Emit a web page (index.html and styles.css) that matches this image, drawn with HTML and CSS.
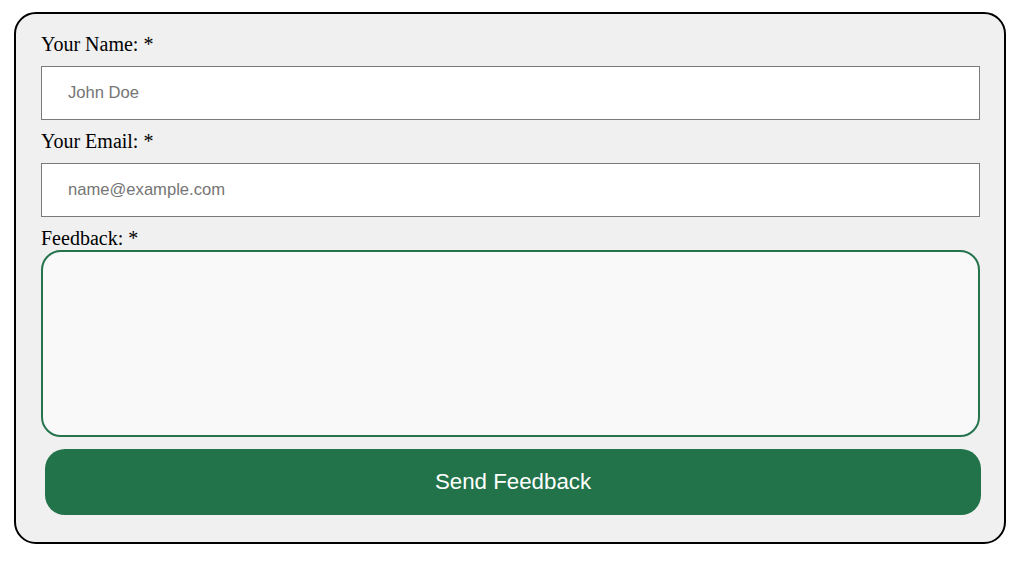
FILE: index.html
```html
<!DOCTYPE html>
<html>
<head>
<meta charset="utf-8">
<link rel="stylesheet" href="styles.css">
</head>
<body>
<form class="feedback-form">
  <label class="field-label" for="name">Your Name: *</label>
  <input class="text-input" id="name" type="text" placeholder="John Doe">
  <label class="field-label" for="email">Your Email: *</label>
  <input class="text-input" id="email" type="email" placeholder="name@example.com">
  <label class="field-label field-label-tight" for="feedback">Feedback: *</label>
  <textarea class="feedback-area" id="feedback"></textarea>
  <button class="submit-btn" type="button">Send Feedback</button>
</form>
</body>
</html>
```
FILE: styles.css
```css
html, body {
  margin: 0;
  padding: 0;
  background: #ffffff;
}
body {
  padding: 12px 0 0 14px;
}
.feedback-form {
  box-sizing: border-box;
  width: 992px;
  height: 532px;
  border: 2px solid #000000;
  border-radius: 22px;
  background: #f0f0f0;
  padding: 19px 24px 0 25px;
  display: flex;
  flex-direction: column;
  align-items: stretch;
}
.field-label {
  display: block;
  font-family: "Liberation Serif", "Times New Roman", serif;
  font-size: 20px;
  line-height: 23px;
  color: #000000;
  margin-bottom: 10px;
}
.field-label-tight {
  margin-bottom: 0;
}
.text-input {
  box-sizing: border-box;
  height: 54px;
  width: 100%;
  margin: 0 0 10px 0;
  border: 1px solid #7a7a7a;
  border-radius: 0;
  background: #ffffff;
  padding: 0 26px;
  font-family: "Liberation Sans", Arial, sans-serif;
  font-size: 16.6px;
  color: #000;
  outline: none;
}
.text-input::placeholder {
  color: #757575;
}
.feedback-area {
  box-sizing: border-box;
  width: 100%;
  height: 187px;
  margin: 0;
  border: 2px solid #25744d;
  border-radius: 20px;
  background: #f9f9f9;
  resize: none;
  outline: none;
  padding: 10px;
}
.submit-btn {
  box-sizing: border-box;
  margin: 12px -1px 0 4px;
  height: 66px;
  border: none;
  border-radius: 20px;
  background: #22734a;
  color: #ffffff;
  font-family: "Liberation Sans", Arial, sans-serif;
  font-size: 22.3px;
  cursor: pointer;
}
```
